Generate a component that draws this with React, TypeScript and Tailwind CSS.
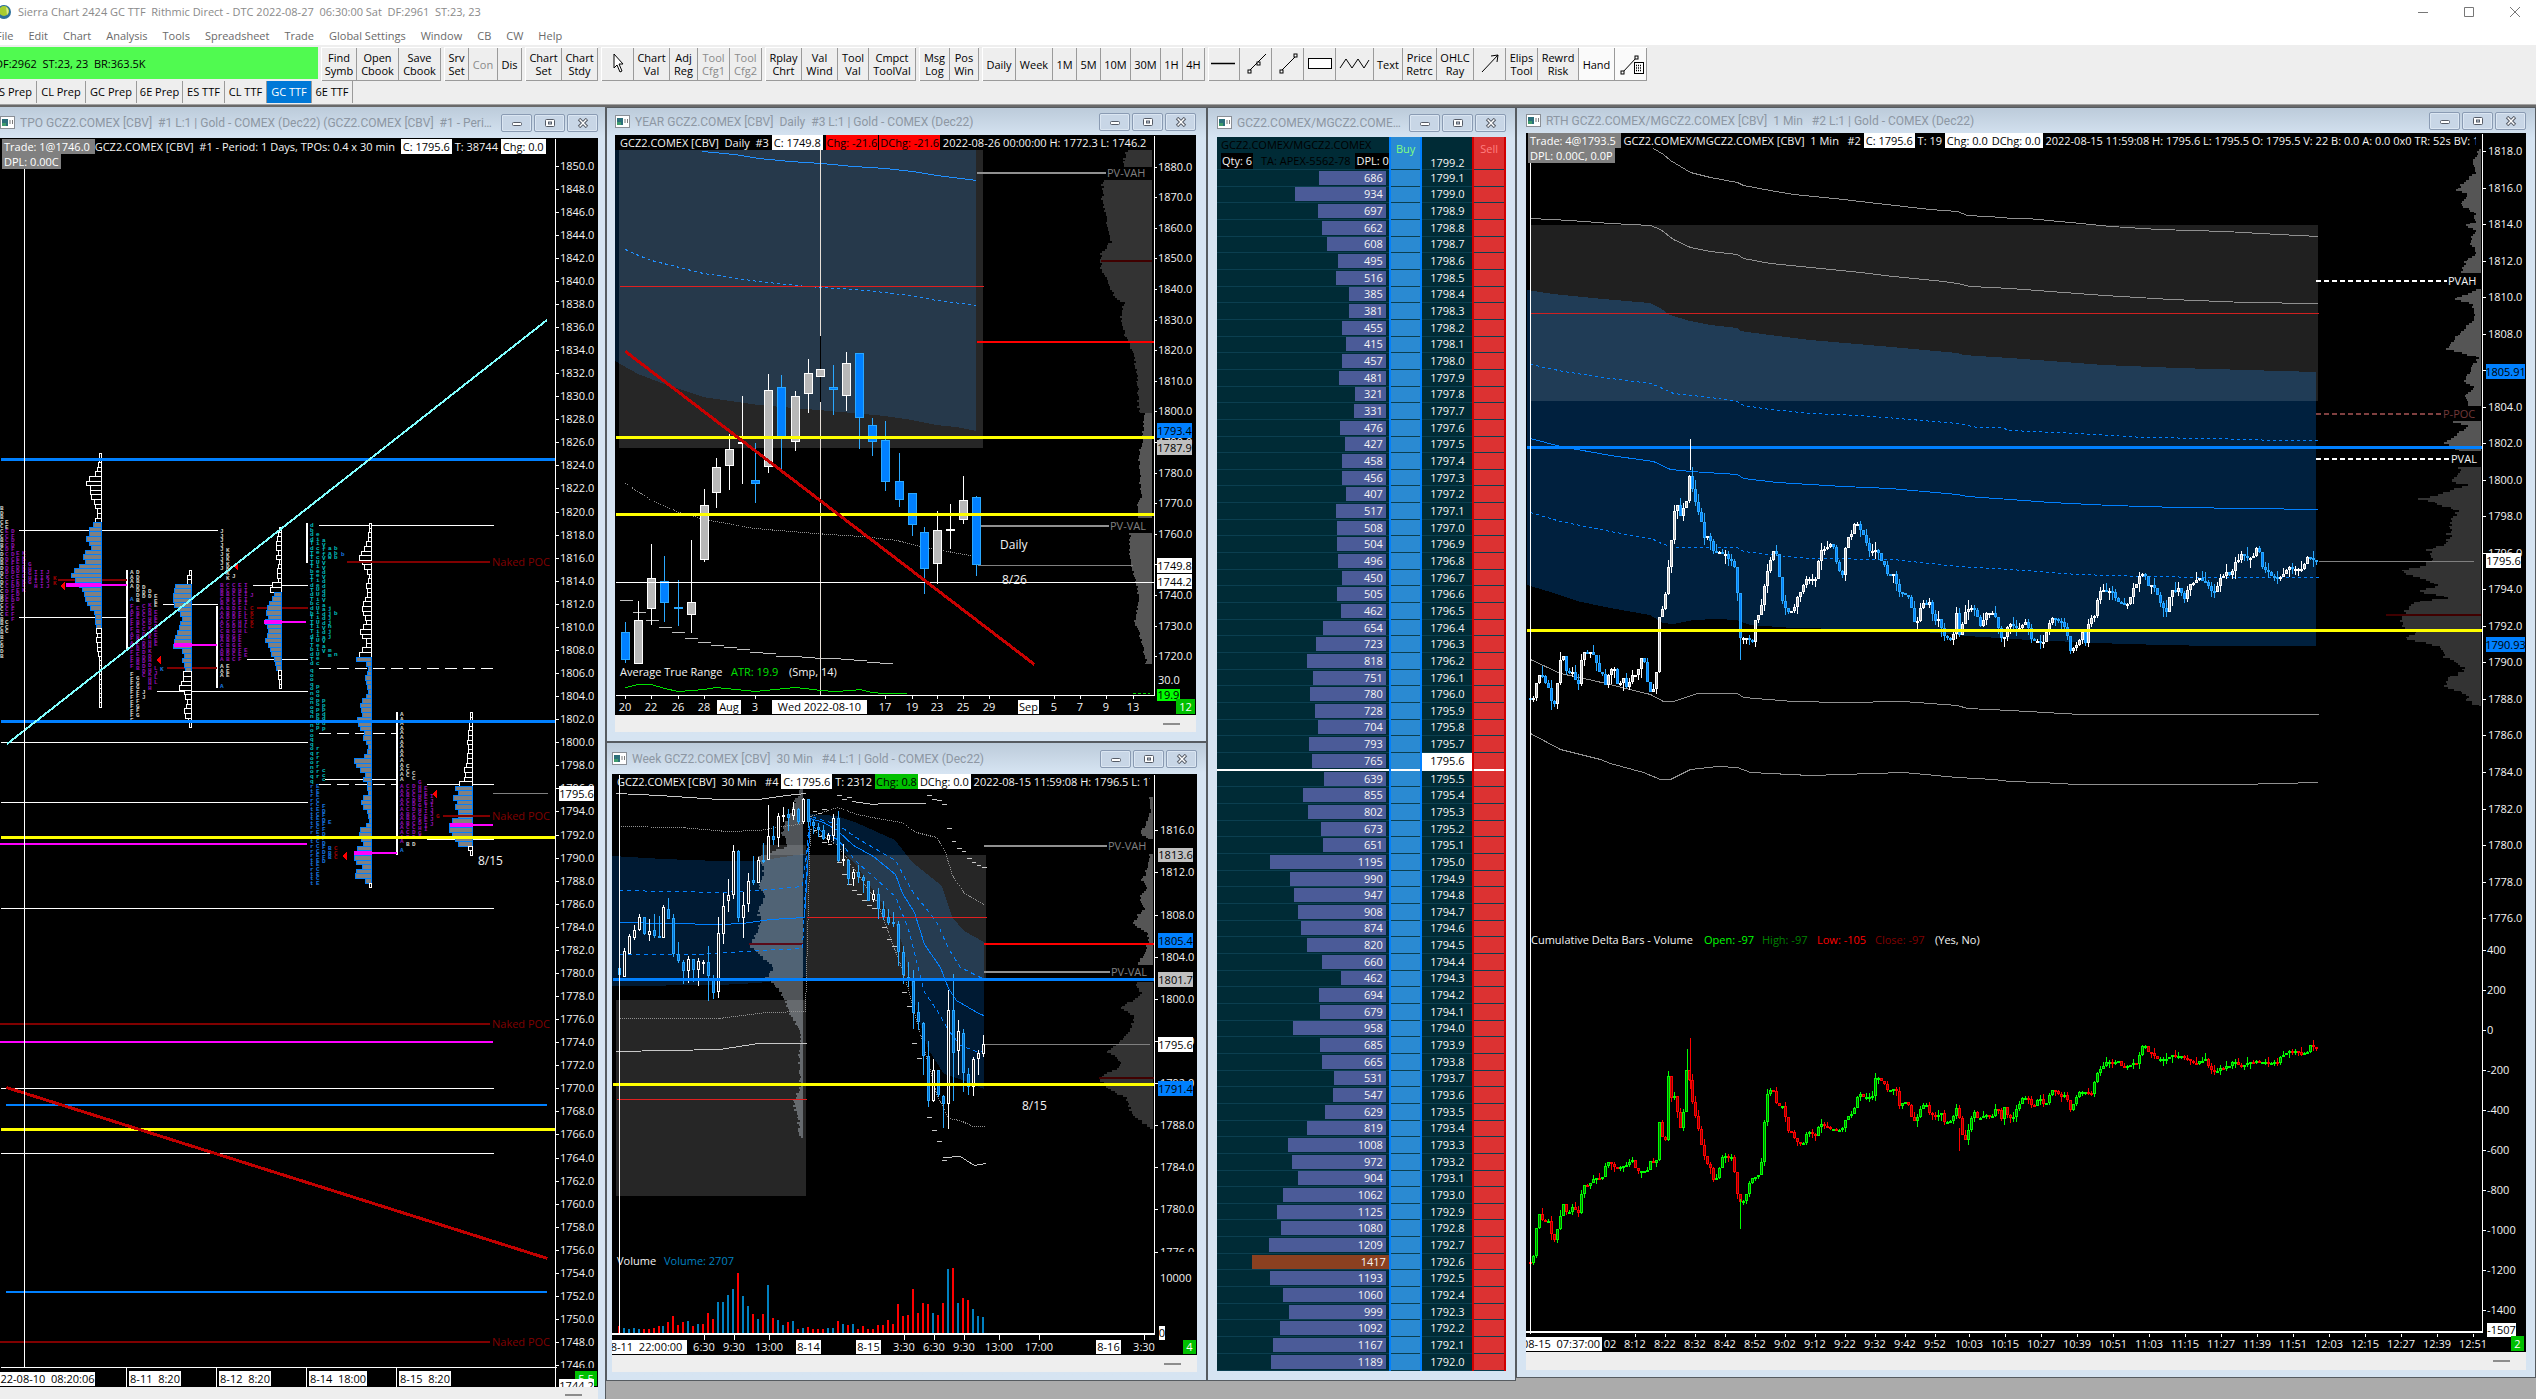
import type { ReactNode } from "react";
import clsx from "clsx";

type Grid = (x: number, y: number) => [number, number];
type Point = [number, number];

// Maps recorded chart units to panel pixels.
const grid =
  (ox: number, oy: number, kx: number, ky: number): Grid =>
  (x, y) => [Math.round(ox + x / kx), Math.round(oy + y / ky)];

const px: Grid = (x, y) => [Math.round(x), Math.round(y)];
const yearGrid = grid(600, 100, 2.529, 2.45);
const weekGrid = grid(600, 740, 2.529, 2.379);
const rthLeft = grid(1510, 100, 3, 2.306);
const rthRight = grid(2010, 100, 2.981, 2.306);
const deltaLeft = grid(1510, 780, 3, 2.533);
const deltaRight = grid(2010, 780, 2.981, 2.533);

const parse = (g: Grid, d: string): Point[] =>
  d
    .trim()
    .split(/\s+/)
    .map((p) => {
      const [x, y] = p.split(",").map(Number);
      return g(x, y);
    });

const toPoints = (pts: Point[]) => pts.map((p) => p.join(",")).join(" ");

const noise = (n: number) => {
  const s = Math.sin(n * 12.9898) * 43758.5453;
  return s - Math.floor(s);
};

/* ---------- chart primitives ---------- */

interface LineProps {
  g?: Grid;
  d: string;
  c?: string;
  w?: number;
  dash?: string;
}

// Odd widths sit on pixel centres so that they stay sharp.
const Line = ({ g = px, d, c = "#fff", w = 1, dash }: LineProps) => {
  const shift = w % 2 ? 0.5 : 0;
  return (
    <polyline
      points={toPoints(parse(g, d).map(([x, y]): Point => [x + shift, y + shift]))}
      fill="none"
      stroke={c}
      strokeWidth={w}
      strokeDasharray={dash}
    />
  );
};

interface LabelProps {
  g?: Grid;
  x: number;
  y: number;
  children: ReactNode;
  c?: string;
  anchor?: "start" | "middle" | "end";
  size?: number;
}

const Label = ({ g = px, x, y, children, c = "#f4f4f4", anchor = "start", size = 11 }: LabelProps) => {
  const [tx, ty] = g(x, y);
  return (
    <text x={tx} y={ty + 4} fill={c} textAnchor={anchor} fontSize={size} className="whitespace-pre">
      {children}
    </text>
  );
};

interface TagProps {
  g?: Grid;
  x: number;
  x2: number;
  y: number;
  y2: number;
  bg?: string;
  c?: string;
  children: ReactNode;
}

const Tag = ({ g = px, x, x2, y, y2, bg = "#fff", c = "#000", children }: TagProps) => {
  const [ax, ay] = g(x, y);
  const [bx, by] = g(x2, y2);
  return (
    <g>
      <rect x={ax} y={ay} width={bx - ax} height={by - ay} fill={bg} />
      <text
        x={(ax + bx) / 2}
        y={Math.round((ay + by) / 2) + 4}
        fill={c}
        fontSize={11}
        textAnchor="middle"
        className="whitespace-pre"
      >
        {children}
      </text>
    </g>
  );
};

// Right-aligned volume profile, one row every two pixels.
const Profile = ({ g, d, right, fill, rough = 3 }: { g: Grid; d: string; right: number; fill: string; rough?: number }) => {
  const pts = parse(g, d);
  const [rx] = g(right, 0);
  let path = "";
  for (let i = 1; i < pts.length; i++) {
    const [x0, y0] = pts[i - 1];
    const [x1, y1] = pts[i];
    for (let y = y0; y < y1; y += 2) {
      const x = Math.round(x0 + ((x1 - x0) * (y - y0)) / (y1 - y0) + (noise(y) - 0.5) * rough);
      path += `M${Math.min(x, rx - 1)} ${y}H${rx}V${Math.min(y + 2, y1)}H${Math.min(x, rx - 1)}Z`;
    }
  }
  return <path d={path} fill={fill} />;
};

// [x, high, low, bodyTop, bodyBottom, up]
type Candle = [number, number, number, number, number, 0 | 1];

interface Palette {
  up: string;
  upFill: string;
  down: string;
  downFill: string;
}

const priceColors: Palette = { up: "#ffffff", upFill: "#b8b8b8", down: "#2aa8ff", downFill: "#0080ff" };
const weekColors: Palette = { up: "#ffffff", upFill: "#202020", down: "#2aa8ff", downFill: "#0070d0" };
const deltaColors: Palette = { up: "#00ff00", upFill: "#008000", down: "#ff0000", downFill: "#900000" };

const Candles = ({ list, half, colors }: { list: Candle[]; half: number; colors: Palette }) => (
  <g>
    {list.map(([x, h, l, t, b, up], i) => (
      <g key={i} stroke={up ? colors.up : colors.down} fill={up ? colors.upFill : colors.downFill}>
        <line x1={x + 0.5} x2={x + 0.5} y1={h} y2={l} />
        <rect x={x - half + 0.5} y={t + 0.5} width={half * 2} height={Math.max(b - t - 1, 0.5)} />
      </g>
    ))}
  </g>
);

// Builds three-pixel bars along a recorded close series.
const barsFromSeries = (pts: Point[], wick: number): Candle[] => {
  const out: Candle[] = [];
  let k = 0;
  let prev = pts[0][1];
  const lastX = pts[pts.length - 1][0];
  for (let x = pts[0][0]; x <= lastX; x += 3) {
    while (k < pts.length - 2 && pts[k + 1][0] <= x) k++;
    const [x0, y0] = pts[k];
    const [x1, y1] = pts[k + 1];
    const t = x1 === x0 ? 1 : Math.min((x - x0) / (x1 - x0), 1);
    const close = Math.round(y0 + (y1 - y0) * t + (noise(x) - 0.5) * wick * 1.2);
    const top = Math.min(prev, close);
    const bottom = Math.max(prev, close, top + 1);
    const high = top - Math.round(noise(x + 7) ** 2 * wick * 3);
    const low = bottom + Math.round(noise(x + 3) ** 2 * wick * 3);
    out.push([x, high, low, top, bottom, close <= prev ? 1 : 0]);
    prev = close;
  }
  return out;
};

/* ---------- window chrome ---------- */

const WindowIcon = () => (
  <svg viewBox="0 0 15 13" className="h-[13px] w-[15px] shrink-0" aria-hidden="true">
    <rect x="0.5" y="0.5" width="14" height="12" fill="#fff" stroke="#8a8f96" />
    <rect x="2" y="3" width="6" height="7" fill="#2c6f7a" />
    <rect x="2" y="7" width="4" height="3" fill="#3f9c6c" />
    <path d="M10 4v4M12.5 4v4" stroke="#7a7a7a" />
  </svg>
);

const captionButton =
  "flex h-[18px] w-[31px] items-center justify-center rounded-[2px] border border-[#8a9bb3] bg-[#c8d6e6] shadow-[inset_0_0_0_1px_#dbe6f2]";

const CaptionButtons = () => (
  <div className="flex shrink-0 gap-[2px]">
    <button className={captionButton} aria-label="Minimize">
      <svg viewBox="0 0 12 10" className="h-[10px] w-3">
        <rect x="1.5" y="4.5" width="9" height="3" rx="1" fill="#fff" stroke="#555b66" />
      </svg>
    </button>
    <button className={captionButton} aria-label="Maximize">
      <svg viewBox="0 0 12 10" className="h-[10px] w-3">
        <rect x="1.5" y="1.5" width="9" height="7" rx="1" fill="#fff" stroke="#555b66" />
        <rect x="4.5" y="4" width="3" height="2" fill="#c8d6e6" stroke="#555b66" />
      </svg>
    </button>
    <button className={captionButton} aria-label="Close">
      <svg viewBox="0 0 12 10" className="h-[10px] w-3">
        <path d="M2 1l8 8M10 1l-8 8" stroke="#555b66" strokeWidth="3.4" />
        <path d="M2.6 1.6l6.8 6.8M9.4 1.6l-6.8 6.8" stroke="#fff" strokeWidth="1.4" />
      </svg>
    </button>
  </div>
);

interface ChildWindowProps {
  title: string;
  frame: string;
  bar: string;
  strip?: string;
  children: ReactNode;
}

const ChildWindow = ({ title, frame, bar, strip, children }: ChildWindowProps) => (
  <section
    className={clsx(
      "flex min-w-0 flex-col border-[#565b60] bg-linear-to-b from-[#bccbda] to-[#d6e4f2] to-[30px]",
      frame
    )}
  >
    <header className={clsx("flex shrink-0 items-center gap-[5px]", bar)}>
      <WindowIcon />
      <h2 className="min-w-0 flex-1 truncate font-['Roboto',sans-serif] text-[12px] whitespace-pre text-[#8d97a3]">
        {title}
      </h2>
      <CaptionButtons />
    </header>
    {children}
    {strip && (
      <div className={clsx("flex shrink-0 items-center justify-end bg-[#eeeeee] pr-4", strip)}>
        <span className="h-[2px] w-[17px] bg-[#8c8c8c]" />
      </div>
    )}
  </section>
);

const infoText = "leading-[15px] text-[#f4f4f4]";
const infoWhite = "bg-white px-[2px] leading-[15px] text-black";
const infoGray = "bg-[#808080] px-[2px] leading-[15px] text-white";
const infoRed = "bg-[#ff0000] px-[1px] leading-[15px] text-black";

const InfoBar = ({ className, children }: { className: string; children: ReactNode }) => (
  <div className={clsx("absolute top-0 left-0 overflow-hidden text-[11px] whitespace-pre", className)}>
    {children}
  </div>
);

/* ---------- TPO chart ---------- */

const ROW = 4.61;

const VolumeColumn = ({ right, top, widths, from, to }: { right: number; top: number; widths: number[]; from: number; to: number }) => (
  <g>
    {widths.map((w, i) => {
      const y = Math.round(top + i * ROW);
      const h = Math.round(top + (i + 1) * ROW) - y;
      const value = i >= from && i < to;
      return (
        <rect
          key={i}
          x={right - w + 0.5}
          y={y + 0.5}
          width={w}
          height={h}
          fill={value ? "#808080" : "#000"}
          stroke={value ? "#0080ff" : "#fff"}
        />
      );
    })}
  </g>
);

const P = "#9010b0";
const W = "#d0d0c8";
const C = "#00c0c0";
const B = "#1878e0";
const R = "#a00000";

// [x, top, bottom, letters, colour]
const tpoLetters: [number, number, number, string, string][] = [
  [0, 506, 656, "BCD", W],
  [5, 520, 527, "E", W],
  [5, 529, 616, "CDE", P],
  [5, 620, 634, "C", W],
  [11, 529, 620, "DCF", P],
  [16, 551, 604, "DE", P],
  [22, 551, 594, "EK", P],
  [28, 562, 587, "GH", P],
  [34, 570, 589, "HI", P],
  [40, 570, 589, "IJ", P],
  [46, 570, 589, "JK", P],
  [53, 576, 585, "K", R],
  [130, 570, 590, "A", W],
  [130, 597, 600, "A", B],
  [130, 604, 668, "AF", P],
  [130, 672, 724, "F", W],
  [136, 570, 603, "BD", W],
  [136, 606, 670, "BE", P],
  [136, 676, 718, "FG", W],
  [142, 585, 600, "D", W],
  [142, 604, 680, "CD", P],
  [142, 690, 700, "J", W],
  [148, 589, 599, "D", W],
  [148, 603, 690, "DHK", P],
  [154, 594, 606, "E", W],
  [154, 610, 646, "E", P],
  [154, 666, 684, "JL", P],
  [160, 667, 670, "K", B],
  [220, 529, 572, "J", W],
  [220, 583, 661, "BAC", P],
  [220, 664, 680, "A", W],
  [220, 684, 688, "A", B],
  [226, 548, 578, "K", W],
  [226, 583, 661, "CBD", P],
  [226, 664, 678, "E", W],
  [232, 574, 580, "J", W],
  [232, 583, 661, "DCG", P],
  [238, 583, 661, "EFH", P],
  [244, 583, 634, "IL", P],
  [244, 648, 655, "E", P],
  [250, 593, 596, "J", P],
  [250, 606, 628, "CK", R],
  [310, 523, 665, "Tbd", C],
  [310, 668, 781, "noq", C],
  [310, 784, 886, "rt", B],
  [316, 532, 665, "Ucei", C],
  [316, 684, 730, "op", C],
  [316, 746, 780, "r", C],
  [316, 784, 886, "CE", B],
  [322, 538, 652, "Vadf", C],
  [322, 698, 730, "pd", C],
  [322, 768, 780, "c", C],
  [322, 804, 864, "DF", B],
  [328, 546, 560, "Wa", C],
  [328, 606, 638, "hj", C],
  [328, 648, 655, "m", C],
  [328, 820, 826, "E", B],
  [328, 846, 858, "B", B],
  [334, 546, 560, "b", C],
  [334, 611, 614, "b", C],
  [334, 652, 655, "n", C],
  [334, 846, 858, "C", R],
  [341, 552, 555, "b", B],
  [400, 712, 780, "A", W],
  [400, 784, 845, "A", P],
  [400, 848, 853, "A", B],
  [406, 764, 780, "C", W],
  [406, 784, 838, "CB", P],
  [406, 842, 848, "B", W],
  [412, 771, 780, "C", W],
  [412, 784, 838, "CD", P],
  [412, 842, 845, "D", W],
  [418, 780, 842, "DGH", P],
  [424, 786, 832, "EI", P],
  [430, 794, 826, "IJ", P],
  [436, 814, 817, "G", R],
];

const TpoLetters = () => (
  <g fontFamily="Liberation Mono, monospace" fontSize={6} fontWeight={700}>
    {tpoLetters.map(([x, top, bottom, letters, color], c) =>
      Array.from({ length: Math.max(1, Math.round((bottom - top) / ROW)) }, (_, i) => (
        <text key={`${c}-${i}`} x={x} y={Math.round(top + i * ROW) + 4} fill={color}>
          {letters[Math.floor(noise(c * 31 + i) * letters.length)]}
        </text>
      ))
    )}
  </g>
);

const priceY = (p: number) => 165.5 + (1850 - p) * 11.535;

const TpoChart = () => (
  <div className="relative bg-black">
    <svg viewBox="0 138 598 1249" className="block w-full" shapeRendering="crispEdges">
      {Array.from({ length: 53 }, (_, i) => 1850 - i * 2).map((p) => (
        <g key={p}>
          <Line d={`555,${priceY(p)} 558,${priceY(p)}`} />
          <Label x={560} y={priceY(p)}>{p.toFixed(1)}</Label>
        </g>
      ))}
      <TpoLetters />

      <Line d="18,530 217,530" />
      <Line d="18,617 126,617" />
      <Line d="162,604 217,604" />
      <Line d="156,691 307,691" />
      <Line d="252,585 307,585" />
      <Line d="246,659 307,659" />
      <Line d="318,525 493,525" />
      <Line d="318,668 493,668" dash="12 6" />
      <Line d="318,733 397,733" dash="12 6" />
      <Line d="0,742 307,742" />
      <Line d="324,779 397,779" />
      <Line d="318,784 397,784" dash="12 6" />
      <Line d="426,784 493,784" />
      <Line d="0,802 307,802" />
      <Line d="426,839 493,839" />
      <Line d="492,793 547,793" c="#808080" />
      <Line d="0,908 493,908" />
      <Line d="0,1088 493,1088" />
      <Line d="0,1153 493,1153" />

      <Line d="127,570 127,651" w={2} />
      <Line d="217,606 217,688" w={2} />
      <Line d="307,523 307,563" w={2} />
      <Line d="397,712 397,855" w={2} />

      <Line d="58,580 127,580" c="#800000" w={2} />
      <Line d="167,668 217,668" c="#800000" w={2} />
      <Line d="257,608 308,608" c="#800000" w={2} />

      <VolumeColumn
        right={101}
        top={453}
        from={15}
        to={38}
        widths={[2, 2, 3, 4, 6, 12, 15, 11, 11, 10, 7, 6, 4, 4, 6, 8, 12, 12, 15, 12, 10, 16, 18, 16, 22, 27, 30, 26, 22, 19, 17, 16, 14, 11, 7, 6, 6, 5, 5, 4, 5, 4, 4, 3, 2, 2, 2, 2, 2, 2, 2, 2, 2, 2, 2]}
      />
      <VolumeColumn
        right={191}
        top={570}
        from={3}
        to={22}
        widths={[2, 4, 4, 16, 17, 18, 18, 17, 13, 11, 9, 11, 12, 14, 16, 17, 18, 9, 7, 9, 7, 6, 8, 8, 10, 12, 7, 6, 4, 5, 7, 6, 3, 2]}
      />
      <VolumeColumn
        right={281}
        top={527}
        from={14}
        to={31}
        widths={[2, 3, 4, 5, 5, 3, 5, 2, 3, 4, 4, 3, 9, 11, 7, 9, 12, 14, 15, 13, 16, 14, 13, 14, 16, 13, 11, 10, 7, 6, 5, 3, 3, 2, 2]}
      />
      <VolumeColumn
        right={371}
        top={523}
        from={29}
        to={78}
        widths={[2, 2, 3, 3, 5, 7, 10, 12, 9, 7, 4, 2, 3, 5, 4, 4, 6, 8, 9, 8, 6, 5, 8, 11, 9, 5, 5, 9, 12, 15, 5, 3, 4, 6, 5, 4, 3, 5, 9, 11, 10, 9, 14, 13, 11, 7, 8, 5, 3, 4, 7, 17, 15, 11, 6, 8, 4, 4, 3, 8, 10, 8, 4, 3, 2, 5, 11, 12, 10, 8, 14, 12, 17, 15, 9, 15, 16, 6, 2]}
      />
      <VolumeColumn
        right={472}
        top={712}
        from={16}
        to={29}
        widths={[2, 2, 3, 3, 4, 4, 5, 4, 4, 5, 5, 6, 8, 7, 8, 13, 17, 14, 19, 15, 17, 14, 14, 20, 23, 23, 20, 17, 14, 4, 2]}
      />

      <Line d="66,585 101,585" c="#ff00ff" w={4} />
      <Line d="101,585 127,585" c="#ff00ff" w={2} />
      <Line d="174,645 192,645" c="#ff00ff" w={4} />
      <Line d="192,645 217,645" c="#ff00ff" w={2} />
      <Line d="264,622 282,622" c="#ff00ff" w={4} />
      <Line d="282,622 306,622" c="#ff00ff" w={2} />
      <Line d="354,853 372,853" c="#ff00ff" w={4} />
      <Line d="372,853 397,853" c="#ff00ff" w={2} />
      <Line d="450,825 473,825" c="#ff00ff" w={4} />
      <Line d="473,825 493,825" c="#ff00ff" w={2} />
      <Line d="0,844 307,844" c="#ff00ff" w={2} />
      <Line d="0,1042 493,1042" c="#ff00ff" w={2} />

      {[562, 816, 1024, 1342].map((y, i) => (
        <g key={y}>
          <Line d={`${[347, 443, 0, 0][i]},${y} 490,${y}`} c="#800000" w={2} />
          <Label x={492} y={y} c="#800000">Naked POC</Label>
        </g>
      ))}
      {[[60, 586], [156, 660], [233, 566], [342, 856], [432, 794]].map(([x, y]) => (
        <path key={x} d={`M${x} ${y}l5 -4v8z`} fill="#ff0000" />
      ))}

      <Line d="0,459 555,459" c="#0080ff" w={3} />
      <Line d="0,721 555,721" c="#0080ff" w={3} />
      <Line d="6,1105 547,1105" c="#0080ff" w={2} />
      <Line d="6,1292 547,1292" c="#0080ff" w={2} />
      <Line d="0,837 555,837" c="#ffff00" w={3} />
      <Line d="0,1129 555,1129" c="#ffff00" w={3} />
      <Line d="7,744 547,320" c="#80ffff" w={2} />
      <Line d="6,1087 547,1258" c="#c00000" w={3} />
      <Line d="24,138 24,1367" />
      <Label x={478} y={861} size={12}>8/15</Label>

      <rect x={0} y={1368} width={598} height={19} fill="#000" />
      <Line d="555,138 555,1387" />
      <Line d="0,1367 556,1367" />
      {[126, 216, 306, 396].map((x) => (
        <Line key={x} d={`${x},1367 ${x},1386`} />
      ))}
      <Tag x={0} x2={95} y={1372} y2={1386}>22-08-10  08:20:06</Tag>
      <Tag x={129} x2={181} y={1371} y2={1386}>8-11  8:20</Tag>
      <Tag x={219} x2={271} y={1371} y2={1386}>8-12  8:20</Tag>
      <Tag x={309} x2={367} y={1371} y2={1386}>8-14  18:00</Tag>
      <Tag x={399} x2={451} y={1371} y2={1386}>8-15  8:20</Tag>
      <Tag x={575} x2={597} y={1371} y2={1386} bg="#00c000" c="#fff">5 5</Tag>
      <Tag x={559} x2={594} y={1379} y2={1393}>1744.2</Tag>
      <Tag x={559} x2={594} y={786} y2={801}>1795.6</Tag>
    </svg>
    <InfoBar className="w-[93%] pl-[2px]">
      <div className="flex pt-[1px]">
        <span className={infoGray}>Trade: 1@1746.0 </span>
        <span className={infoText}>{"GCZ2.COMEX [CBV]  #1 - Period: 1 Days, TPOs: 0.4 x 30 min  "}</span>
        <span className={infoWhite}>C: 1795.6</span>
        <span className={infoText}> T: 38744 </span>
        <span className={infoWhite}>Chg: 0.0</span>
      </div>
      <div className="flex">
        <span className={infoGray}>DPL: 0.00C</span>
      </div>
    </InfoBar>
  </div>
);

/* ---------- daily chart ---------- */

const yearCandles = (
  [
    [64, 1280, 1380, 1304, 1373, 0],
    [97, 1228, 1382, 1275, 1382, 1],
    [130, 1088, 1286, 1170, 1246, 1],
    [163, 1116, 1278, 1178, 1232, 0],
    [196, 1177, 1289, 1241, 1244, 0],
    [229, 1079, 1305, 1231, 1261, 1],
    [262, 953, 1133, 993, 1128, 1],
    [294, 877, 1000, 900, 964, 1],
    [327, 818, 955, 855, 896, 1],
    [360, 725, 940, 838, 844, 1],
    [393, 840, 987, 932, 940, 0],
    [426, 672, 915, 711, 898, 1],
    [459, 674, 904, 704, 830, 0],
    [492, 713, 860, 724, 837, 1],
    [525, 635, 767, 670, 721, 1],
    [590, 649, 771, 704, 710, 0],
    [623, 617, 763, 645, 724, 1],
    [656, 620, 855, 620, 778, 0],
    [689, 778, 872, 797, 839, 0],
    [722, 786, 958, 832, 937, 0],
    [755, 866, 997, 934, 979, 0],
    [788, 963, 1067, 964, 1042, 0],
    [820, 1046, 1210, 1059, 1150, 0],
    [853, 1007, 1187, 1054, 1137, 1],
    [886, 990, 1100, 1052, 1055, 1],
    [919, 921, 1038, 979, 1030, 1],
    [952, 970, 1165, 973, 1140, 0],
  ] as Candle[]
).map(([x, h, l, t, b, up]): Candle => {
  const [cx, hy] = yearGrid(x, h);
  return [cx, hy, yearGrid(0, l)[1], yearGrid(0, t)[1], yearGrid(0, b)[1], up];
});

const yearSteps = [
  [48, 1225], [81, 1255], [113, 1275], [147, 1290], [180, 1304], [212, 1319], [245, 1329],
  [278, 1336], [310, 1341], [343, 1346], [376, 1353], [409, 1356], [442, 1361], [475, 1363],
  [508, 1365], [541, 1366], [574, 1368], [607, 1370], [640, 1373], [672, 1376], [705, 1380],
];

const yearDates: [string, number][] = [
  ["20", 64], ["22", 130], ["26", 196], ["28", 262], ["3", 393], ["17", 722], ["19", 788],
  ["23", 853], ["25", 919], ["29", 985], ["5", 1149], ["7", 1215], ["9", 1280], ["13", 1347],
];

const YearChart = () => {
  const g = yearGrid;
  return (
    <div className="relative bg-black">
      <svg viewBox="615 135 581 580" className="block w-full" shapeRendering="crispEdges">
        <polygon
          points={toPoints(parse(g, "38,122 952,122 952,811 900,801 850,797 790,783 720,773 640,766 520,758 400,748 260,727 150,692 95,672 38,640"))}
          fill="#00172c"
        />
        <rect x={619} y={150} width={364} height={298} fill="#fff" fillOpacity={0.15} />
        <Profile g={g} right={1396} fill="#333" d="1332,122 1322,150 1328,165" />
        <Profile
          g={g}
          right={1396}
          fill="#333"
          d="1273,195 1270,240 1285,310 1292,345 1268,375 1268,410 1285,440 1300,480 1325,495 1315,540 1330,580 1350,620 1360,690 1362,767"
        />
        <Profile g={g} right={1396} fill="#555" rough={2} d="1376,767 1372,820 1362,870 1366,930 1368,970 1358,990 1360,1023" />
        <Profile
          g={g}
          right={1396}
          fill="#555"
          rough={2}
          d="1340,1062 1340,1090 1338,1110 1345,1140 1355,1180 1362,1220 1354,1280 1365,1310 1382,1370 1382,1382"
        />
        <Line g={g} d="258,124 340,132 400,141 480,149 560,155 640,161 720,167 790,175 850,184 952,195" c="#2090ff" />
        <Line
          g={g}
          d="64,365 95,380 130,393 180,405 260,425 400,444 520,455 640,462 720,470 800,480 850,490 952,503"
          c="#2090ff"
          dash="3 3"
        />
        <Line g={g} d="64,939 130,980 200,1010 262,1027 390,1049 540,1062 660,1069 750,1079 820,1095 952,1116" c="#909090" dash="1 1" />
        {yearSteps.map(([x, y]) => (
          <Line key={x} g={g} d={`${x},${y} ${x + 33},${y}`} c="#c0c0c0" />
        ))}
        <Line g={g} d="48,455 968,455" c="#e02020" />
        <Line g={g} d="1266,394 1396,394" c="#400000" w={2} />
        <Line g={g} d="953,592 1400,592" c="#ff0000" w={2} />
        <Line g={g} d="953,178 1280,178" c="#909090" w={2} />
        <Label g={g} x={1283} y={178} c="#808080">PV-VAH</Label>
        <Line g={g} d="953,1043 1287,1043" c="#909090" w={2} />
        <Label g={g} x={1290} y={1043} c="#808080">PV-VAL</Label>
        <Line g={g} d="953,1140 1345,1140" c="#808080" />
        <Line g={g} d="557,86 557,1458" c="#e8e0d8" />
        <Candles list={yearCandles} half={4} colors={priceColors} />
        <Line g={g} d="557,576 557,738" c="#000" />
        <rect x={816.5} y={369.5} width={8} height={7} fill="#b8b8b8" stroke="#fff" />
        <Line g={g} d="38,1182 1400,1182" />
        <Line g={g} d="38,825 1400,825" c="#ffff00" w={3} />
        <Line g={g} d="38,1015 1400,1015" c="#ffff00" w={3} />
        <Line g={g} d="64,614 1097,1382" c="#c80000" w={3} />
        <Label g={g} x={1012} y={1090} size={12}>Daily</Label>
        <Label g={g} x={1016} y={1176} size={12}>8/26</Label>

        <Label g={g} x={51} y={1401}>Average True Range</Label>
        <Label g={g} x={332} y={1401} c="#00e000">ATR: 19.9</Label>
        <Label g={g} x={477} y={1401}>(Smp, 14)</Label>
        <Line
          g={g}
          d="64,1437 97,1431 130,1431 163,1441 196,1448 262,1442 294,1438 393,1448 492,1438 558,1446 590,1448 640,1446 656,1443 689,1450 715,1454 774,1454"
          c="#00e000"
        />
        <Line g={g} d="1345,1453 1388,1453" c="#00e000" dash="3 2" />

        <Line g={g} d="1400,86 1400,1458" />
        <Line g={g} d="38,1458 1400,1458" />
        {[1880, 1870, 1860, 1850, 1840, 1830, 1820, 1810, 1800, 1790, 1780, 1770, 1760, 1750, 1740, 1730, 1720].map((p) => {
          const y = 166.5 + (1880 - p) * 3.061;
          return (
            <g key={p}>
              <Line d={`1154,${y} 1156,${y}`} />
              {p !== 1750 && <Label x={1158} y={y}>{p.toFixed(1)}</Label>}
            </g>
          );
        })}
        <Label g={g} x={1411} y={1422}>30.0</Label>
        <Tag g={g} x={1409} x2={1497} y={791} y2={828} bg="#0080ff">1793.4</Tag>
        <Tag g={g} x={1409} x2={1497} y={834} y2={870} bg="#c0c0c0">1787.9</Tag>
        <Tag g={g} x={1409} x2={1497} y={1123} y2={1158}>1749.8</Tag>
        <Tag g={g} x={1409} x2={1497} y={1161} y2={1197}>1744.2</Tag>
        <Tag g={g} x={1409} x2={1467} y={1443} y2={1472} bg="#00ff00">19.9</Tag>
        {yearDates.map(([d, x]) => (
          <g key={d}>
            <Line g={g} d={`${x},1458 ${x},1466`} />
            <Label g={g} x={x} y={1487} anchor="middle">{d}</Label>
          </g>
        ))}
        <Tag g={g} x={297} x2={357} y={1470} y2={1504}>Aug</Tag>
        <Tag g={g} x={435} x2={675} y={1470} y2={1504}>Wed 2022-08-10</Tag>
        <Tag g={g} x={1057} x2={1110} y={1470} y2={1504}>Sep</Tag>
        <Tag g={g} x={1457} x2={1505} y={1468} y2={1504} bg="#00c000" c="#fff">12</Tag>
      </svg>
      <InfoBar className="w-[92%] pl-[5px]">
        <div className="flex">
          <span className={infoText}>{"GCZ2.COMEX [CBV]  Daily  #3 "}</span>
          <span className={infoWhite}>C: 1749.8</span>
          <span className={infoText}> </span>
          <span className={infoRed}>Chg: -21.6</span>
          <span className="w-px" />
          <span className={infoRed}>DChg: -21.6</span>
          <span className={infoText}>{" 2022-08-26 00:00:00 H: 1772.3 L: 1746.2"}</span>
        </div>
      </InfoBar>
    </div>
  );
};

/* ---------- 30 minute chart ---------- */

const weekRaw: [number, number, number, number, 0 | 1][] = [
  [515, 570, 543, 560, 0], [495, 565, 503, 563, 1], [462, 508, 466, 508, 1], [440, 475, 452, 470, 1],
  [415, 455, 422, 452, 1], [420, 465, 422, 462, 0], [425, 478, 455, 463, 1], [415, 470, 453, 466, 0],
  [418, 470, 466, 468, 0], [393, 470, 397, 470, 1], [375, 427, 402, 426, 0], [415, 517, 424, 508, 0],
  [480, 530, 509, 525, 0], [523, 580, 527, 550, 0], [515, 578, 520, 550, 1], [520, 575, 521, 546, 0],
  [518, 585, 526, 546, 1], [523, 557, 528, 531, 1], [490, 622, 528, 562, 0], [558, 615, 570, 603, 0],
  [420, 613, 460, 600, 1], [365, 485, 395, 461, 1], [330, 408, 368, 382, 1], [250, 378, 264, 368, 1],
  [262, 434, 265, 423, 0], [362, 470, 393, 423, 1], [316, 410, 335, 390, 1], [275, 345, 332, 340, 0],
  [278, 340, 285, 340, 1], [245, 292, 286, 288, 0], [155, 285, 229, 285, 1], [205, 250, 229, 237, 0],
  [173, 255, 181, 234, 1], [160, 195, 178, 183, 1], [165, 217, 175, 186, 0], [148, 190, 163, 180, 1],
  [162, 200, 163, 196, 0], [137, 200, 141, 196, 1], [140, 210, 141, 195, 0], [190, 223, 195, 205, 0],
  [197, 230, 206, 213, 0], [203, 238, 215, 235, 0], [222, 245, 226, 238, 1], [175, 240, 185, 228, 1],
  [170, 290, 186, 288, 0], [247, 300, 282, 289, 1], [283, 345, 285, 330, 0], [308, 347, 315, 330, 1],
  [298, 340, 313, 326, 0], [320, 365, 325, 335, 0], [335, 383, 335, 382, 0], [358, 385, 367, 380, 1],
  [352, 425, 367, 403, 0], [383, 428, 403, 420, 0], [403, 440, 421, 435, 0], [410, 445, 433, 437, 0],
  [430, 538, 437, 505, 0], [490, 580, 504, 560, 0], [527, 588, 564, 570, 0], [547, 687, 573, 650, 0],
  [623, 690, 648, 672, 0], [672, 798, 674, 752, 0], [716, 872, 752, 858, 0], [760, 862, 786, 858, 1],
  [785, 850, 784, 844, 0], [845, 922, 846, 866, 0], [595, 925, 643, 865, 1], [557, 858, 642, 744, 0],
  [665, 798, 692, 740, 1], [688, 838, 697, 793, 0], [780, 845, 795, 825, 0], [755, 848, 760, 826, 1],
  [738, 798, 745, 760, 1], [702, 755, 724, 746, 1],
];

const weekCandles = weekRaw.map(([h, l, t, b, up], i): Candle => {
  const [x, hy] = weekGrid(47 + i * 12.62, h);
  return [x, hy, weekGrid(0, l)[1], weekGrid(0, t)[1], weekGrid(0, b)[1], up];
});

const weekVolume =
  "19r 15b 13b 15b 13b 13r 13r 15r 20r 18b 29r 43r 22r 29r 32b 18r 24b 24r 51r 36r 77b 77b 93b 108b 146r 91b 67b 48r 36b 47r 117b 39r 34b 22b 29r 32b 13r 15b 17r 11r 13r 13r 15b 15b 32r 23b 21r 24b 13r 18r 13r 13r 22r 21r 34r 24r 72r 43r 46r 108r 51r 74r 72r 51b 46r 74r 155b 158r 74b 86r 82r 60b 43b 41b".split(" ");

const weekDashes = [
  [597, 132], [610, 140], [622, 135], [824, 132], [837, 140], [850, 143], [862, 153], [875, 210], [887, 240],
  [900, 257], [912, 265], [925, 280], [937, 290], [950, 298], [963, 303], [535, 168], [548, 173], [560, 165],
  [535, 215], [548, 228], [560, 243], [573, 248], [597, 290], [610, 318], [622, 343], [635, 358], [648, 367],
  [660, 380], [673, 393], [686, 400], [698, 420], [711, 444], [723, 474], [736, 490], [761, 600], [774, 633],
  [786, 722], [799, 756], [824, 898], [837, 927], [850, 953], [862, 998],
];

const weekTimes: [string, number][] = [
  ["6:30", 262], ["9:30", 338], ["13:00", 428], ["3:30", 768], ["6:30", 844], ["9:30", 920],
  ["13:00", 1008], ["17:00", 1109], ["3:30", 1375],
];

const WeekChart = () => {
  const g = weekGrid;
  const [, base] = g(0, 1413);
  return (
    <div className="relative bg-black">
      <svg viewBox="612 774 585 581" className="block w-full" shapeRendering="crispEdges">
        <polygon
          points={toPoints(parse(g, "30,277 160,283 300,288 400,287 513,272 521,272 521,565 400,577 300,584 30,585"))}
          fill="#001a33"
        />
        <polygon
          points={toPoints(
            parse(g, "530,175 600,180 650,197 745,238 790,290 865,347 890,420 920,455 970,480 970,830 915,810 870,795 830,735 805,660 790,590 770,500 745,430 700,370 650,300 590,240 530,190")
          )}
          fill="#001a33"
        />
        <rect x={616} y={1000} width={190} height={196} fill="#262626" />
        <rect x={806} y={855} width={180} height={124} fill="#fff" fillOpacity={0.15} />
        <rect x={762} y={845} width={44} height={10} fill="#fff" fillOpacity={0.15} />
        <Profile
          g={g}
          right={513}
          fill="rgba(190,200,210,0.42)"
          d="508,115 490,150 460,220 475,250 400,275 415,300 405,350 420,370 400,400 405,430 395,460 378,486 405,510 440,540 420,565 450,590 470,620 480,650 500,680 507,700 503,790 505,820 488,860 500,900 507,948"
        />
        <Line g={g} d="378,486 513,486" c="#5a0a18" w={2} />
        <Profile g={g} right={1398} fill="#555" d="1392,135 1392,165 1380,200 1365,215 1385,235" />
        <Profile
          g={g}
          right={1398}
          fill="#555"
          d="1392,272 1385,300 1370,330 1385,350 1365,368 1375,400 1345,432 1385,460 1380,500 1355,535"
        />
        <Profile
          g={g}
          right={1398}
          fill="#333"
          d="1355,575 1368,605 1318,635 1350,655 1345,680 1320,710 1285,740 1320,765 1305,780 1272,795 1262,803 1290,830 1330,850 1345,890 1385,915 1392,925"
        />
        <Line g={g} d="1262,803 1400,803" c="#400000" w={2} />

        <Line
          g={g}
          d="47,432 300,438 360,435 430,427 517,422 530,185 565,195 600,215 640,250 690,275 745,318 765,365 795,410 820,485 860,540 880,590 900,618 930,635 960,652 970,655"
          c="#0080ff"
        />
        <Line
          g={g}
          d="47,356 300,362 400,357 510,348 530,180 600,200 650,232 745,285 790,360 850,430 880,495 910,540 970,568"
          c="#0080ff"
          dash="4 4"
        />
        <Line
          g={g}
          d="47,510 250,510 400,500 510,495 525,200 600,235 650,290 745,370 780,450 820,600 850,640 880,690 910,725 950,740 970,741"
          c="#0080ff"
          dash="4 4"
        />
        <Line g={g} d="47,204 200,208 320,216 400,214 513,198" c="#909090" dash="1 1" />
        <Line
          g={g}
          d="530,180 600,160 650,175 700,185 760,195 800,220 850,230 870,260 890,320 920,365 970,391"
          c="#909090"
          dash="1 1"
        />
        <Line
          g={g}
          d="47,662 300,662 420,648 518,645 530,210 600,250 700,385 770,560 810,700 850,840 880,900 910,903 940,919 970,919"
          c="#909090"
          dash="1 1"
        />
        <Line g={g} d="40,127 150,130 300,140 400,141 470,131 520,125" c="#c8c8c8" />
        <Line g={g} d="40,739 300,736 400,720 521,720" c="#c8c8c8" />
        <Line g={g} d="637,146 690,152 715,149 822,149" c="#c8c8c8" />
        <Line g={g} d="868,993 910,990 925,1000 945,1010 976,1007" c="#c8c8c8" />
        {weekDashes.map(([x, y]) => (
          <Line key={`${x}-${y}`} g={g} d={`${x},${y} ${x + 12},${y}`} c="#c8c8c8" />
        ))}
        <Line g={g} d="40,853 521,853" c="#e02020" />
        <Line g={g} d="521,422 976,422" c="#e02020" />
        <Line g={g} d="970,486 1400,486" c="#ff0000" w={2} />
        <Line g={g} d="970,253 1282,253" c="#909090" w={2} />
        <Label g={g} x={1285} y={253} c="#808080">PV-VAH</Label>
        <Line g={g} d="970,553 1290,553" c="#909090" w={2} />
        <Label g={g} x={1293} y={553} c="#808080">PV-VAL</Label>
        <Line g={g} d="970,724 1388,724" c="#808080" />
        <Candles list={weekCandles} half={1} colors={weekColors} />
        <Line g={g} d="30,569 1400,569" c="#0080ff" w={3} />
        <Line g={g} d="30,819 1400,819" c="#ffff00" w={3} />
        <Label g={g} x={1068} y={870} size={12}>8/15</Label>

        {weekVolume.map((v, i) => {
          const h = Math.round(parseInt(v) / 2.379);
          const [x] = g(47 + i * 12.62, 0);
          return <rect key={i} x={x - 1} y={base - h} width={2} height={h} fill={v.endsWith("r") ? "#ff0000" : "#0080c0"} />;
        })}
        <Label g={g} x={43} y={1240}>Volume</Label>
        <Label g={g} x={162} y={1240} c="#0080c0">Volume: 2707</Label>

        <Line g={g} d="47,81 47,1414" />
        <Line g={g} d="1402,81 1402,1414" />
        <Line g={g} d="30,1414 1402,1414" w={2} />
        {[1816, 1812, 1808, 1804, 1800, 1796, 1792, 1788, 1784, 1780, 1776].map((p, i) => (
          <g key={p}>
            <Line g={g} d={`1402,${215 + i * 100.2} 1408,${215 + i * 100.2}`} />
            <Label g={g} x={1415} y={215 + i * 100.2}>{p.toFixed(1)}</Label>
          </g>
        ))}
        <rect x={1158} y={1252} width={38} height={8} fill="#000" />
        <Label g={g} x={1415} y={1279}>10000</Label>
        <Tag g={g} x={1411} x2={1499} y={256} y2={290} bg="#c0c0c0">1813.6</Tag>
        <Tag g={g} x={1411} x2={1499} y={460} y2={495} bg="#0080ff">1805.4</Tag>
        <Tag g={g} x={1411} x2={1499} y={553} y2={588} bg="#c0c0c0">1801.7</Tag>
        <Tag g={g} x={1411} x2={1499} y={707} y2={742}>1795.6</Tag>
        <Tag g={g} x={1411} x2={1499} y={812} y2={847} bg="#0080ff">1791.4</Tag>
        <Tag g={g} x={1413} x2={1429} y={1395} y2={1428}>0</Tag>
        {weekTimes.map(([t, x]) => (
          <g key={x}>
            <Line g={g} d={`${x},1414 ${x},1424`} />
            <Label g={g} x={x} y={1443} anchor="middle">{t}</Label>
          </g>
        ))}
        <Tag g={g} x={24} x2={220} y={1427} y2={1460}>8-11  22:00:00 </Tag>
        <Tag g={g} x={496} x2={558} y={1427} y2={1460}>8-14</Tag>
        <Tag g={g} x={647} x2={710} y={1427} y2={1460}>8-15</Tag>
        <Tag g={g} x={1255} x2={1317} y={1427} y2={1460}>8-16</Tag>
        <Tag g={g} x={1474} x2={1507} y={1427} y2={1460} bg="#00c000" c="#fff">4</Tag>
      </svg>
      <InfoBar className="w-[92%] pl-[5px]">
        <div className="flex">
          <span className={infoText}>{"GCZ2.COMEX [CBV]  30 Min   #4 "}</span>
          <span className={infoWhite}>C: 1795.6</span>
          <span className={infoText}> T: 2312 </span>
          <span className="bg-[#00c000] px-[1px] leading-[15px] text-black">Chg: 0.8</span>
          <span className="w-[2px]" />
          <span className={infoWhite}>DChg: 0.0</span>
          <span className={infoText}>{" 2022-08-15 11:59:08 H: 1796.5 L: 1795.0"}</span>
        </div>
      </InfoBar>
    </div>
  );
};

/* ---------- price ladder ---------- */

const ladderVolumes = [
  686, 934, 697, 662, 608, 495, 516, 385, 381, 455, 415, 457, 481, 321, 331, 476, 427, 458, 456, 407, 517,
  508, 504, 496, 450, 505, 462, 654, 723, 818, 751, 780, 728, 704, 793, 765, 639, 855, 802, 673, 651, 1195,
  990, 947, 908, 874, 820, 660, 462, 694, 679, 958, 685, 665, 531, 547, 629, 819, 1008, 972, 904, 1062,
  1125, 1080, 1209, 1417, 1193, 1060, 999, 1092, 1167, 1189,
];

const LAST = 35;

const Ladder = () => (
  <div className="min-h-0 flex-1 overflow-hidden bg-[#002b36]">
    <table className="h-full w-full table-fixed border-collapse text-[11px] leading-[12px] text-[#f4f4f4]">
      <colgroup>
        <col className="w-[60%]" />
        <col className="w-[11%]" />
        <col className="w-[18%]" />
        <col className="w-[11%]" />
      </colgroup>
      <thead>
        <tr className="h-8 border-b border-[#0b3f50]">
          <th className="overflow-hidden p-0 pl-1 text-left font-normal whitespace-pre">
            <div className="leading-4 text-black">GCZ2.COMEX/MGCZ2.COMEX</div>
            <div className="flex leading-4">
              <span className="bg-black px-px">Qty: 6</span>
              <span className="flex-1 pl-2 text-black">TA: APEX-5562-78</span>
              <span className="bg-black pl-px">DPL: 0</span>
            </div>
          </th>
          <th className="border-x-2 border-[#0080ff] bg-[#2a8ad2] p-0 pb-2 font-normal text-[#80ff80]">Buy</th>
          <th className="p-0 align-bottom font-normal">1799.2</th>
          <th className="border-x-2 border-[#d00000] bg-[#dc3232] p-0 pb-2 font-normal text-[#ff8080]">Sell</th>
        </tr>
      </thead>
      <tbody>
        {ladderVolumes.map((v, i) => (
          <tr key={i} className={i === LAST ? "border-b-2 border-white" : "border-b border-[#0b3f50]"}>
            <td className="p-0">
              <div
                className={clsx(
                  "ml-auto py-px pr-[3px] text-right",
                  v === 1417 ? "bg-[#8b4020]" : "mr-[3px] bg-[#4b5b98]"
                )}
                style={{ width: `${v * 0.0563}%` }}
              >
                {v}
              </div>
            </td>
            <td className="border-x-2 border-x-[#0080ff] bg-[#2a8ad2] p-0" />
            <td className={clsx("p-0 text-center", i === LAST && "bg-white text-black")}>
              {(1799.1 - i * 0.1).toFixed(1)}
            </td>
            <td className="border-x-2 border-x-[#d00000] bg-[#dc3232] p-0" />
          </tr>
        ))}
      </tbody>
    </table>
  </div>
);

/* ---------- one minute chart ---------- */

const rthBars = barsFromSeries(
  [
    ...parse(
      rthLeft,
      "61,1378 70,1380 79,1345 88,1325 97,1328 106,1345 115,1358 124,1390 133,1388 142,1345 151,1290 160,1282 169,1320 187,1322 205,1348 214,1290 223,1272 250,1278 262,1310 276,1325 288,1355 297,1315 312,1308 324,1355 340,1332 355,1360 360,1325 380,1325 396,1275 405,1300 414,1365 425,1372 434,1345 443,1280 448,1190 461,1165 470,1100 479,1035 488,980 495,910 503,945 515,965 521,925 530,920 539,845 548,925 560,930 566,968 575,975 584,1030 593,990 602,1030 620,1045 640,1050 660,1055 675,1080 684,1170 691,1235 710,1240 725,1248 735,1200 750,1178 765,1110 775,1070 788,1040 797,1050 806,1100 815,1160 830,1175 848,1180 862,1145 885,1108 915,1102 925,1060 937,1035 960,1025 973,1035 982,1080 995,1095 1003,1045 1012,1005 1025,1002 1035,965 1045,990 1060,1000 1075,1040 1100,1035 1115,1065 1135,1098 1155,1095 1162,1130 1180,1135 1200,1155 1210,1205 1220,1205 1232,1155 1250,1170 1260,1155 1270,1200 1285,1195 1300,1228 1325,1250 1338,1180 1350,1248 1360,1190 1385,1165 1400,1190 1408,1220 1430,1180 1450,1180 1463,1220 1480,1250 1488,1210 1498,1212"
    ),
    ...parse(
      rthRight,
      "0,1205 20,1215 45,1205 65,1245 95,1255 105,1230 125,1195 145,1200 165,1215 180,1270 200,1255 215,1230 225,1250 235,1195 250,1190 258,1150 270,1125 290,1135 305,1130 320,1155 345,1168 370,1120 395,1085 412,1120 435,1120 442,1160 465,1175 478,1135 505,1125 520,1150 535,1115 560,1105 585,1115 605,1138 622,1110 640,1088 660,1100 668,1065 690,1050 715,1055 740,1030 752,1080 775,1090 790,1108 810,1095 835,1080 870,1080 885,1055 905,1060 918,1065"
    ),
  ],
  3
);

const deltaBars = barsFromSeries(
  [
    ...parse(
      deltaLeft,
      "61,1220 70,1205 79,1135 88,1100 97,1115 120,1120 126,1185 135,1150 145,1130 152,1088 160,1075 170,1102 188,1080 205,1100 214,1045 224,1020 235,1030 250,1010 275,1008 288,968 305,972 325,985 345,975 370,960 377,995 400,985 415,990 422,955 432,980 440,958 448,865 457,905 468,918 475,750 484,805 495,795 503,865 515,893 521,790 530,705 539,790 548,828 557,860 566,893 575,937 584,963 600,983 611,1017 622,1003 636,955 662,953 673,990 683,1070 704,1065 710,1032 722,1008 742,1005 750,983 758,938 765,800 785,775 797,820 820,832 828,865 837,897 846,890 855,918 880,917 890,888 915,900 925,877 945,875 960,885 985,890 998,878 1008,850 1030,848 1035,812 1052,792 1065,807 1085,798 1088,768 1098,748 1115,762 1132,785 1158,785 1160,828 1175,815 1192,812 1200,845 1208,870 1222,855 1232,822 1247,825 1252,850 1262,838 1270,857 1292,842 1298,865 1325,865 1333,838 1343,820 1350,890 1367,920 1377,872 1385,845 1395,838 1405,862 1425,848 1445,852 1452,835 1465,835 1470,867 1485,818 1495,858"
    ),
    ...parse(
      deltaRight,
      "0,855 10,850 20,825 35,805 55,810 68,828 85,805 105,822 125,785 140,788 150,805 165,793 180,836 190,812 205,790 230,790 245,795 252,748 265,735 290,715 325,712 335,733 365,720 382,717 388,685 397,667 410,690 435,700 440,712 460,705 480,700 510,700 535,710 550,720 585,708 592,735 620,735 660,722 665,710 690,727 710,715 745,715 795,717 800,702 825,692 855,683 865,694 885,692 895,675 918,682"
    ),
  ],
  2
);

const rthCurve = (left: string, right: string) => toPoints([...parse(rthLeft, left), ...parse(rthRight, right)]);

const rthCurves: [string, string, string?][] = [
  [
    rthCurve(
      "430,110 460,125 480,138 540,165 600,178 680,188 700,196 780,208 850,216 1000,228 1100,238 1260,252 1340,257 1370,265 1480,270",
      "0,272 50,273 180,282 300,290 440,297 640,303 800,310 918,313"
    ),
    "#909090",
  ],
  [
    rthCurve(
      "61,271 180,276 300,284 420,289 450,297 490,320 540,340 600,349 680,356 700,365 780,375 900,386 1050,397 1150,405 1300,417 1340,421 1380,428",
      "0,434 120,440 280,449 480,459 700,466 918,469"
    ),
    "#909090",
  ],
  [
    rthCurve(
      "61,609 160,624 300,640 420,652 450,662 490,676 600,686 680,693 700,703 780,713 900,721 1050,727 1200,735 1340,745 1400,753 1470,755",
      "0,760 200,768 400,776 600,780 800,784 918,785"
    ),
    "#0080ff",
    "3 3",
  ],
  [
    rthCurve(
      "61,779 150,797 300,818 430,832 480,851 540,855 680,862 700,871 800,882 1000,891 1140,895 1340,908 1370,914",
      "0,920 120,928 300,935 500,938 918,943"
    ),
    "#0080ff",
  ],
  [
    rthCurve(
      "61,950 150,970 300,995 430,1012 460,1024 500,1030 680,1030 700,1040 800,1050 900,1056 1150,1059 1340,1075",
      "0,1082 200,1092 400,1097 600,1100 918,1101"
    ),
    "#0080ff",
    "3 3",
  ],
  [
    rthCurve(
      "61,1290 150,1322 260,1340 420,1370 460,1387 490,1387 560,1368 680,1368 700,1376 850,1387 1000,1389 1180,1387 1340,1396 1370,1402",
      "0,1407 210,1416 918,1417"
    ),
    "#909090",
  ],
  [
    rthCurve(
      "61,1460 150,1497 270,1520 300,1530 400,1550 450,1566 480,1566 540,1543 620,1536 680,1538 720,1550 900,1556 1180,1550 1340,1561 1450,1566",
      "0,1570 90,1573 200,1578 680,1578 918,1573"
    ),
    "#909090",
  ],
];

const rthTimes: [string, number][] = [
  ...["8:12", "8:22", "8:32", "8:42", "8:52", "9:02", "9:12", "9:22", "9:32", "9:42", "9:52"].map(
    (t, i): [string, number] => [t, 1635 + i * 30]
  ),
  ["10:03", 1969],
  ...["10:15", "10:27", "10:39", "10:51", "11:03", "11:15", "11:27", "11:39", "11:51", "12:03", "12:15", "12:27", "12:39", "12:51"].map(
    (t, i): [string, number] => [t, 2005 + i * 36]
  ),
];

const RthChart = () => {
  const g = rthRight;
  return (
    <div className="relative bg-black">
      <svg viewBox="1526 133 1000 1219" className="block w-full" shapeRendering="crispEdges">
        <polygon
          points={toPoints([
            ...parse(
              rthLeft,
              "51,438 130,447 280,460 420,469 450,480 480,495 540,510 600,518 680,525 690,532 780,543 900,554 1040,562 1180,572 1340,583 1360,588"
            ),
            ...parse(g, "0,595 280,610 500,617 912,628 912,1258 600,1258 340,1255"),
            ...parse(
              rthLeft,
              "1560,1245 1370,1237 1180,1222 850,1218 720,1210 680,1200 620,1196 550,1198 490,1208 460,1205 420,1188 300,1172 200,1155 110,1132 51,1118"
            ),
          ])}
          fill="#00203e"
        />
        <rect x={1530} y={225} width={788} height={176} fill="#fff" fillOpacity={0.125} />
        <Profile
          g={g}
          right={1404}
          fill="#555"
          d="1398,112 1380,140 1385,165 1355,185 1332,206 1365,215 1345,240 1385,260 1390,280 1360,287 1385,300 1372,325 1390,350 1355,372 1345,398"
        />
        <Profile
          g={g}
          right={1404}
          fill="#555"
          d="1390,435 1330,457 1380,470 1385,500 1330,545 1303,573 1395,592 1370,622 1350,645 1385,660 1360,680 1365,705"
        />
        <Profile g={g} right={1404} fill="#555" d="1320,741 1365,750 1330,770 1298,788 1340,810" />
        <Profile
          g={g}
          right={1404}
          fill="#333"
          rough={6}
          d="1345,847 1315,877 1360,885 1290,905 1220,917 1280,930 1330,945 1310,985 1310,1020 1245,1035 1258,1055 1235,1070 1167,1087 1220,1100 1280,1115 1215,1130 1300,1145 1205,1158 1170,1185 1175,1210 1205,1225 1185,1240 1285,1258 1290,1283 1340,1298 1355,1315 1310,1330 1295,1348 1350,1365 1365,1382 1395,1398"
        />
        <Line g={g} d="1120,1187 1404,1187" c="#400000" w={2} />
        <g transform="translate(0.5 0.5)">
          {rthCurves.map(([points, c, dash], i) => (
            <polyline key={i} points={points} fill="none" stroke={c} strokeDasharray={dash} />
          ))}
        </g>
        <Line d="1530,313 2318,313" c="#d02020" />
        <Line d="1526,447 2482,447" c="#0080ff" w={3} />
        <Line g={g} d="918,1062 1380,1062" c="#808080" />
        <Line g={g} d="912,417 1303,417" w={2} dash="5 3" />
        <Label g={g} x={1307} y={417}>PVAH</Label>
        <Line g={g} d="912,723 1286,723" c="#804040" w={2} dash="5 3" />
        <Label g={g} x={1292} y={723} c="#703838">P-POC</Label>
        <Line g={g} d="912,829 1310,829" w={2} dash="5 3" />
        <Label g={g} x={1316} y={829}>PVAL</Label>
        <Candles list={rthBars} half={1} colors={priceColors} />
        <Line g={rthLeft} d="539,779 539,850" />
        <Line g={rthLeft} d="691,1235 691,1288" c="#2aa8ff" />
        <Line d="1526,630 2482,630" c="#ffff00" w={3} />

        <Candles list={deltaBars} half={1} colors={deltaColors} />
        <Line g={deltaLeft} d="539,652 539,780" c="#ff0000" />
        <Line g={deltaLeft} d="530,680 530,815" c="#00ff00" />
        <Line g={deltaLeft} d="691,1060 691,1135" c="#00ff00" />
        <Line g={deltaLeft} d="1348,880 1348,937" c="#ff0000" />
        <Label x={1531} y={940}>Cumulative Delta Bars - Volume</Label>
        <Label x={1704} y={940} c="#00ff00">Open: -97</Label>
        <Label x={1762} y={940} c="#008000">High: -97</Label>
        <Label x={1817} y={940} c="#ff0000">Low: -105</Label>
        <Label x={1875} y={940} c="#800000">Close: -97</Label>
        <Label x={1935} y={940}>(Yes, No)</Label>

        <Line d="1530,133 1530,1333" />
        <Line d="2482,133 2482,1332" />
        <Line d="1526,1332 2483,1332" w={2} />
        {Array.from({ length: 18 }, (_, i) => (
          <g key={i}>
            <Line d={`2482,${151 + i * 36.53} 2485,${151 + i * 36.53}`} />
            <Label x={2488} y={151 + i * 36.53}>{(1818 - i * 2).toFixed(1)}</Label>
          </g>
        ))}
        {Array.from({ length: 4 }, (_, i) => (
          <g key={i}>
            <Line d={`2482,${809 + i * 36.4} 2485,${809 + i * 36.4}`} />
            <Label x={2488} y={809 + i * 36.4}>{(1782 - i * 2).toFixed(1)}</Label>
          </g>
        ))}
        {Array.from({ length: 10 }, (_, i) => (
          <g key={i}>
            <Line d={`2482,${950 + i * 40} 2485,${950 + i * 40}`} />
            <Label x={2487} y={950 + i * 40}>{400 - i * 200}</Label>
          </g>
        ))}
        <Tag g={g} x={1419} x2={1536} y={609} y2={643} bg="#0080ff">1805.91</Tag>
        <Tag g={g} x={1419} x2={1522} y={1045} y2={1079}>1795.6</Tag>
        <Tag g={g} x={1419} x2={1536} y={1238} y2={1273} bg="#0080ff">1790.93</Tag>
        <Tag x={2487} x2={2516} y={1323} y2={1337}>-1507</Tag>
        <Tag x={2511} x2={2524} y={1336} y2={1351} bg="#00c000" c="#fff">2</Tag>
        {rthTimes.map(([t, x]) => (
          <g key={t}>
            <Line d={`${x},1333 ${x},1336`} />
            <Label x={x} y={1344} anchor="middle">{t}</Label>
          </g>
        ))}
        <Label x={1610} y={1344} anchor="middle">02</Label>
        <Tag x={1520} x2={1602} y={1337} y2={1351}>08-15  07:37:00</Tag>
      </svg>
      <InfoBar className="w-[95%] pl-[2px]">
        <div className="flex">
          <span className={infoGray}>Trade: 4@1793.5 </span>
          <span className={infoText}>{" GCZ2.COMEX/MGCZ2.COMEX [CBV]  1 Min   #2 "}</span>
          <span className={infoWhite}>C: 1795.6</span>
          <span className={infoText}> T: 19 </span>
          <span className={infoWhite}>Chg: 0.0</span>
          <span className="w-px" />
          <span className={infoWhite}>DChg: 0.0</span>
          <span className={infoText}>
            {" 2022-08-15 11:59:08 H: 1795.6 L: 1795.5 O: 1795.5 V: 22 B: 0.0 A: 0.0 0x0 TR: 52s BV: 1"}
          </span>
        </div>
        <div className="flex">
          <span className={infoGray}>DPL: 0.00C, 0.0P</span>
        </div>
      </InfoBar>
    </div>
  );
};

/* ---------- main window ---------- */

const menu = ["File", "Edit", "Chart", "Analysis", "Tools", "Spreadsheet", "Trade", "Global Settings", "Window", "CB", "CW", "Help"];

interface Tool {
  label: string;
  w: string;
  icon?: ReactNode;
  off?: boolean;
  pressed?: boolean;
}

const node = (x: number, y: number) => <rect x={x} y={y} width="3" height="3" fill="#fff" stroke="#000" />;

const groups: Tool[][] = [
  [
    { label: "Find\nSymb", w: "w-[35px]" },
    { label: "Open\nCbook", w: "w-[42px]" },
    { label: "Save\nCbook", w: "w-[42px]" },
  ],
  [
    { label: "Srv\nSet", w: "w-[24px]" },
    { label: "Con", w: "w-[29px]", off: true },
    { label: "Dis", w: "w-[24px]" },
  ],
  [
    { label: "Chart\nSet", w: "w-[36px]" },
    { label: "Chart\nStdy", w: "w-[36px]" },
  ],
  [
    {
      label: "Pointer",
      w: "w-[32px]",
      icon: <path d="M12 6v14l3-3 3 7 2-1-3-7h4z" fill="#fff" stroke="#000" />,
    },
    { label: "Chart\nVal", w: "w-[36px]" },
    { label: "Adj\nReg", w: "w-[28px]" },
    { label: "Tool\nCfg1", w: "w-[32px]", off: true },
    { label: "Tool\nCfg2", w: "w-[32px]", off: true },
  ],
  [
    { label: "Rplay\nChrt", w: "w-[36px]" },
    { label: "Val\nWind", w: "w-[36px]" },
    { label: "Tool\nVal", w: "w-[31px]" },
    { label: "Cmpct\nToolVal", w: "w-[47px]" },
  ],
  [
    { label: "Msg\nLog", w: "w-[30px]" },
    { label: "Pos\nWin", w: "w-[29px]" },
  ],
  [
    { label: "Daily", w: "w-[33px]" },
    { label: "Week", w: "w-[37px]" },
    { label: "1M", w: "w-[24px]" },
    { label: "5M", w: "w-[24px]" },
    { label: "10M", w: "w-[30px]" },
    { label: "30M", w: "w-[30px]" },
    { label: "1H", w: "w-[22px]" },
    { label: "4H", w: "w-[22px]" },
  ],
  [
    { label: "Horizontal line", w: "w-[31px]", icon: <path d="M3 15.500h24" stroke="#000" strokeWidth="1.500" /> },
    {
      label: "Ray",
      w: "w-[32px]",
      icon: (
        <>
          <path d="M8 24L26 6" stroke="#000" />
          {node(8, 22)}
          {node(17, 14)}
        </>
      ),
    },
    {
      label: "Line",
      w: "w-[32px]",
      icon: (
        <>
          <path d="M8 24L24 8" stroke="#000" />
          {node(8, 22)}
          {node(22, 6)}
        </>
      ),
    },
    { label: "Rectangle", w: "w-[32px]", icon: <rect x="4.500" y="10.500" width="23" height="10" fill="#fff" stroke="#000" /> },
    { label: "Zig zag", w: "w-[38px]", icon: <path d="M1 20l6-9 6 9 6-9 6 9 5-8" fill="none" stroke="#000" /> },
    { label: "Text", w: "w-[29px]" },
    { label: "Price\nRetrc", w: "w-[34px]" },
    { label: "OHLC\nRay", w: "w-[37px]" },
    { label: "Arrow", w: "w-[32px]", icon: <path d="M8 24L24 7M17 8l7-1-1 7" fill="none" stroke="#000" /> },
    { label: "Elips\nTool", w: "w-[32px]" },
    { label: "Rewrd\nRisk", w: "w-[41px]" },
    { label: "Hand", w: "w-[36px]", pressed: true },
    {
      label: "Line calculator",
      w: "w-[32px]",
      pressed: true,
      icon: (
        <>
          <path d="M7 25L22 9" stroke="#000" />
          {node(6, 23)}
          {node(20, 8)}
          <rect x="19.500" y="14.500" width="9" height="11" fill="#fff" stroke="#000" />
          <path d="M21 17.500h6M21 20h6M21 22.500h6" stroke="#000" strokeDasharray="1 1" strokeWidth="1.500" />
        </>
      ),
    },
  ],
];

const tabs: [string, string][] = [
  ["ES Prep", "w-[37px]"],
  ["CL Prep", "w-[49px]"],
  ["GC Prep", "w-[51px]"],
  ["6E Prep", "w-[46px]"],
  ["ES TTF", "w-[42px]"],
  ["CL TTF", "w-[42px]"],
  ["GC TTF", "w-[45px]"],
  ["6E TTF", "w-[41px]"],
];

const TopBar = () => (
  <div className="shrink-0 bg-[#eeeeee] text-[11px]">
    <div className="flex h-6 items-center justify-between bg-white pr-4">
      <div className="flex items-center gap-[6px]">
        <svg viewBox="0 0 12 14" className="h-[14px] w-3" aria-hidden="true">
          <circle cx="4" cy="7" r="7" fill="#2c6f9c" />
          <circle cx="4" cy="6" r="5" fill="#a8cc30" />
          <path d="M6 2a5 5 0 0 1 1 8z" fill="#d8e890" />
        </svg>
        <h1 className="text-[11px] whitespace-pre text-[#8a8a8a]">
          Sierra Chart 2424 GC TTF  Rithmic Direct - DTC 2022-08-27  06:30:00 Sat  DF:2961  ST:23, 23
        </h1>
      </div>
      <div className="flex gap-9 text-[#777]">
        {["M0 5.500h10", "M.5 .5h9v9h-9z", "M0 0l10 10M10 0L0 10"].map((d, i) => (
          <button key={d} aria-label={["Minimize", "Restore", "Close"][i]}>
            <svg viewBox="0 0 10 10" className="h-[10px] w-[10px]" fill="none" stroke="currentColor">
              <path d={d} />
            </svg>
          </button>
        ))}
      </div>
    </div>
    <nav className="-ml-1 flex h-[21px] items-center gap-[15px] bg-white pt-1 text-[11px] text-[#6a6a6a]">
      {menu.map((m) => (
        <a key={m} href="#" className="whitespace-nowrap">
          {m}
        </a>
      ))}
    </nav>
    <div className="flex h-9 items-start gap-[3px] pt-[2px] leading-[13px]">
      <div className="flex h-8 w-[318px] items-center bg-[#50fa50] text-[11px] whitespace-pre text-black">
        <span className="-ml-[5px]">DF:2962  ST:23, 23  BR:363.5K</span>
      </div>
      {groups.map((tools, i) => (
        <div key={i} className="flex border-t border-l border-white">
          {tools.map((t) => (
            <button
              key={t.label}
              aria-label={t.icon ? t.label : undefined}
              className={clsx(
                "flex h-[33px] shrink-0 items-center justify-center border-r border-b border-[#9a9a9a] text-center whitespace-pre",
                t.w,
                t.off ? "text-[#8a8a8a]" : "text-black",
                t.pressed && "bg-[#fafafa]"
              )}
            >
              {t.icon ? (
                <svg viewBox="0 0 32 32" className="h-8 w-8 shrink-0">
                  {t.icon}
                </svg>
              ) : (
                t.label
              )}
            </button>
          ))}
        </div>
      ))}
    </div>
    <div className="flex h-[23px] items-stretch border-b border-[#eeeeee]">
      {tabs.map(([label, w]) => (
        <button
          key={label}
          className={clsx(
            "flex shrink-0 items-center justify-center overflow-hidden border-r border-[#9a9a9a] whitespace-nowrap",
            w,
            label === "GC TTF" ? "bg-[#0078d7] text-white" : "text-black",
            label === "ES Prep" && "justify-end! pr-1"
          )}
        >
          {label}
        </button>
      ))}
    </div>
    <div className="h-[3px] border-t border-[#a0a0a0] bg-[#696969]" />
  </div>
);

export default function App() {
  return (
    <div className="flex h-screen flex-col overflow-hidden bg-[#ababab] font-['Open_Sans','Noto_Sans',sans-serif]">
      <TopBar />
      <main className="grid min-h-0 flex-1 grid-cols-[606fr_601fr_309fr_1020fr] grid-rows-[minmax(0,1fr)] overflow-hidden">
        <ChildWindow
          title="TPO GCZ2.COMEX [CBV]  #1 L:1 | Gold - COMEX (Dec22) (GCZ2.COMEX [CBV]  #1 - Period: 1 Days)"
          frame="border-r pr-[7px]"
          bar="h-[31px]"
          strip="h-4"
        >
          <TpoChart />
        </ChildWindow>
        <div className="min-w-0">
          <ChildWindow
            title="YEAR GCZ2.COMEX [CBV]  Daily  #3 L:1 | Gold - COMEX (Dec22)"
            frame="border pr-[10px] pb-[9px] pl-2"
            bar="h-[27px]"
            strip="h-[17px]"
          >
            <YearChart />
          </ChildWindow>
          <ChildWindow
            title="Week GCZ2.COMEX [CBV]  30 Min   #4 L:1 | Gold - COMEX (Dec22)"
            frame="border pr-[9px] pb-2 pl-[5px]"
            bar="h-[31px]"
            strip="h-[17px]"
          >
            <WeekChart />
          </ChildWindow>
        </div>
        <ChildWindow title="GCZ2.COMEX/MGCZ2.COMEX [CBV]  #5" frame="mb-[18px] border px-[9px] pb-[9px]" bar="h-[29px]">
          <Ladder />
        </ChildWindow>
        <ChildWindow
          title="RTH GCZ2.COMEX/MGCZ2.COMEX [CBV]  1 Min   #2 L:1 | Gold - COMEX (Dec22)"
          frame="self-start border px-[9px] pb-[7px]"
          bar="h-[25px]"
          strip="h-[18px]"
        >
          <RthChart />
        </ChildWindow>
      </main>
    </div>
  );
}
